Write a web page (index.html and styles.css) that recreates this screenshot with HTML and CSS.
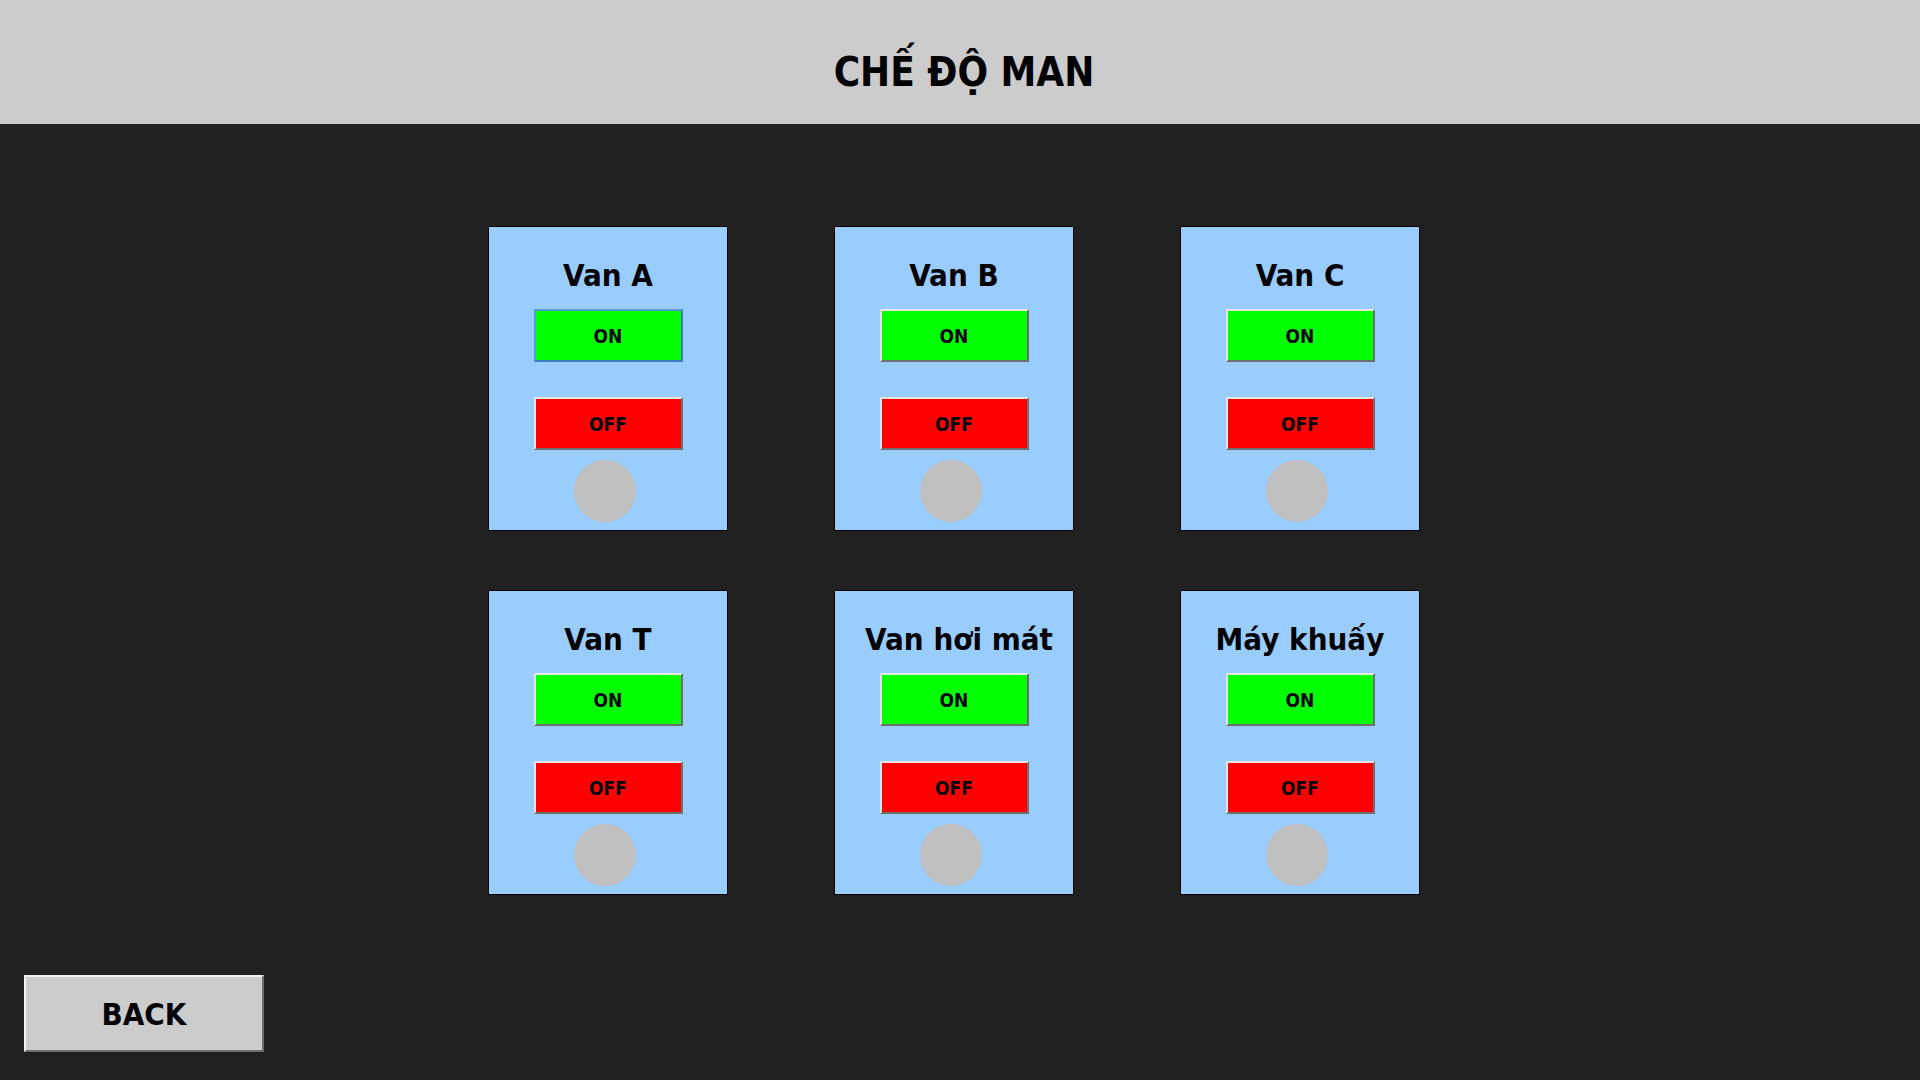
FILE: index.html
```html
<!DOCTYPE html>
<html lang="vi">
<head>
<meta charset="utf-8">
<title>CHẾ ĐỘ MAN</title>
<link rel="stylesheet" href="styles.css">
</head>
<body>
<header class="topbar"><h1 class="title">CHẾ ĐỘ MAN</h1></header>
<main class="main">
  <section class="grid">
    <div class="card">
      <div class="card-title">Van A</div>
      <button class="btn btn-on btn-focus">ON</button>
      <button class="btn btn-off">OFF</button>
      <div class="lamp"></div>
    </div>
    <div class="card">
      <div class="card-title">Van B</div>
      <button class="btn btn-on">ON</button>
      <button class="btn btn-off">OFF</button>
      <div class="lamp"></div>
    </div>
    <div class="card">
      <div class="card-title">Van C</div>
      <button class="btn btn-on">ON</button>
      <button class="btn btn-off">OFF</button>
      <div class="lamp"></div>
    </div>
    <div class="card">
      <div class="card-title">Van T</div>
      <button class="btn btn-on">ON</button>
      <button class="btn btn-off">OFF</button>
      <div class="lamp"></div>
    </div>
    <div class="card">
      <div class="card-title card-title-shift">Van hơi mát</div>
      <button class="btn btn-on">ON</button>
      <button class="btn btn-off">OFF</button>
      <div class="lamp"></div>
    </div>
    <div class="card">
      <div class="card-title">Máy khuấy</div>
      <button class="btn btn-on">ON</button>
      <button class="btn btn-off">OFF</button>
      <div class="lamp"></div>
    </div>
  </section>
  <div class="footer">
    <button class="back">BACK</button>
  </div>
</main>
</body>
</html>
```
FILE: styles.css
```css
* { box-sizing: border-box; }
html, body {
  margin: 0;
  padding: 0;
  height: 100%;
}
body {
  background: #212121;
  font-family: "DejaVu Sans Condensed", "DejaVu Sans", sans-serif;
  font-stretch: condensed;
  font-weight: bold;
  color: #000;
  overflow: hidden;
}
.topbar {
  height: 124px;
  background: #cccccc;
  display: flex;
  align-items: center;
  justify-content: center;
}
.title {
  margin: 0;
  padding-left: 8px;
  padding-top: 20px;
  font-size: 40px;
  line-height: 48px;
  font-weight: bold;
}
.main {
  padding-top: 102px;
}
.grid {
  margin-left: 488px;
  display: grid;
  grid-template-columns: repeat(3, 240px);
  column-gap: 106px;
  row-gap: 59px;
  width: max-content;
}
.card {
  height: 305px;
  background: #99ccff;
  border: 1px solid #000;
  display: flex;
  flex-direction: column;
  align-items: center;
  padding-top: 30px;
}
.card-title {
  font-size: 31px;
  line-height: 36px;
  height: 36px;
  white-space: nowrap;
}
.card-title-shift {
  margin-left: 10px;
}
.btn {
  font-family: inherit;
  font-stretch: condensed;
  font-weight: bold;
  font-size: 19px;
  color: #000;
  width: 149px;
  height: 53px;
  padding: 0;
  margin: 0;
  border-style: solid;
  border-width: 2px;
  border-color: #e6e6e6 #6e6e6e #6e6e6e #e6e6e6;
  display: flex;
  align-items: center;
  justify-content: center;
}
.btn-on {
  background: #00ff00;
  margin-top: 16px;
}
.btn-focus {
  border-color: #5b9ad8 #3f7bc0 #3f7bc0 #5b9ad8;
}
.btn-off {
  background: #ff0000;
  margin-top: 35px;
}
.lamp {
  width: 62px;
  height: 62px;
  border-radius: 50%;
  background: #c0c0c0;
  margin-top: 10px;
  margin-right: 6px;
}
.footer {
  margin-top: 80px;
  padding-left: 24px;
}
.back {
  width: 240px;
  height: 77px;
  background: #cccccc;
  font-family: inherit;
  font-stretch: condensed;
  font-weight: bold;
  font-size: 31px;
  color: #000;
  border-style: solid;
  border-width: 2px;
  border-color: #f2f2f2 #6e6e6e #6e6e6e #f2f2f2;
  padding: 0;
  display: flex;
  align-items: center;
  justify-content: center;
}
```
